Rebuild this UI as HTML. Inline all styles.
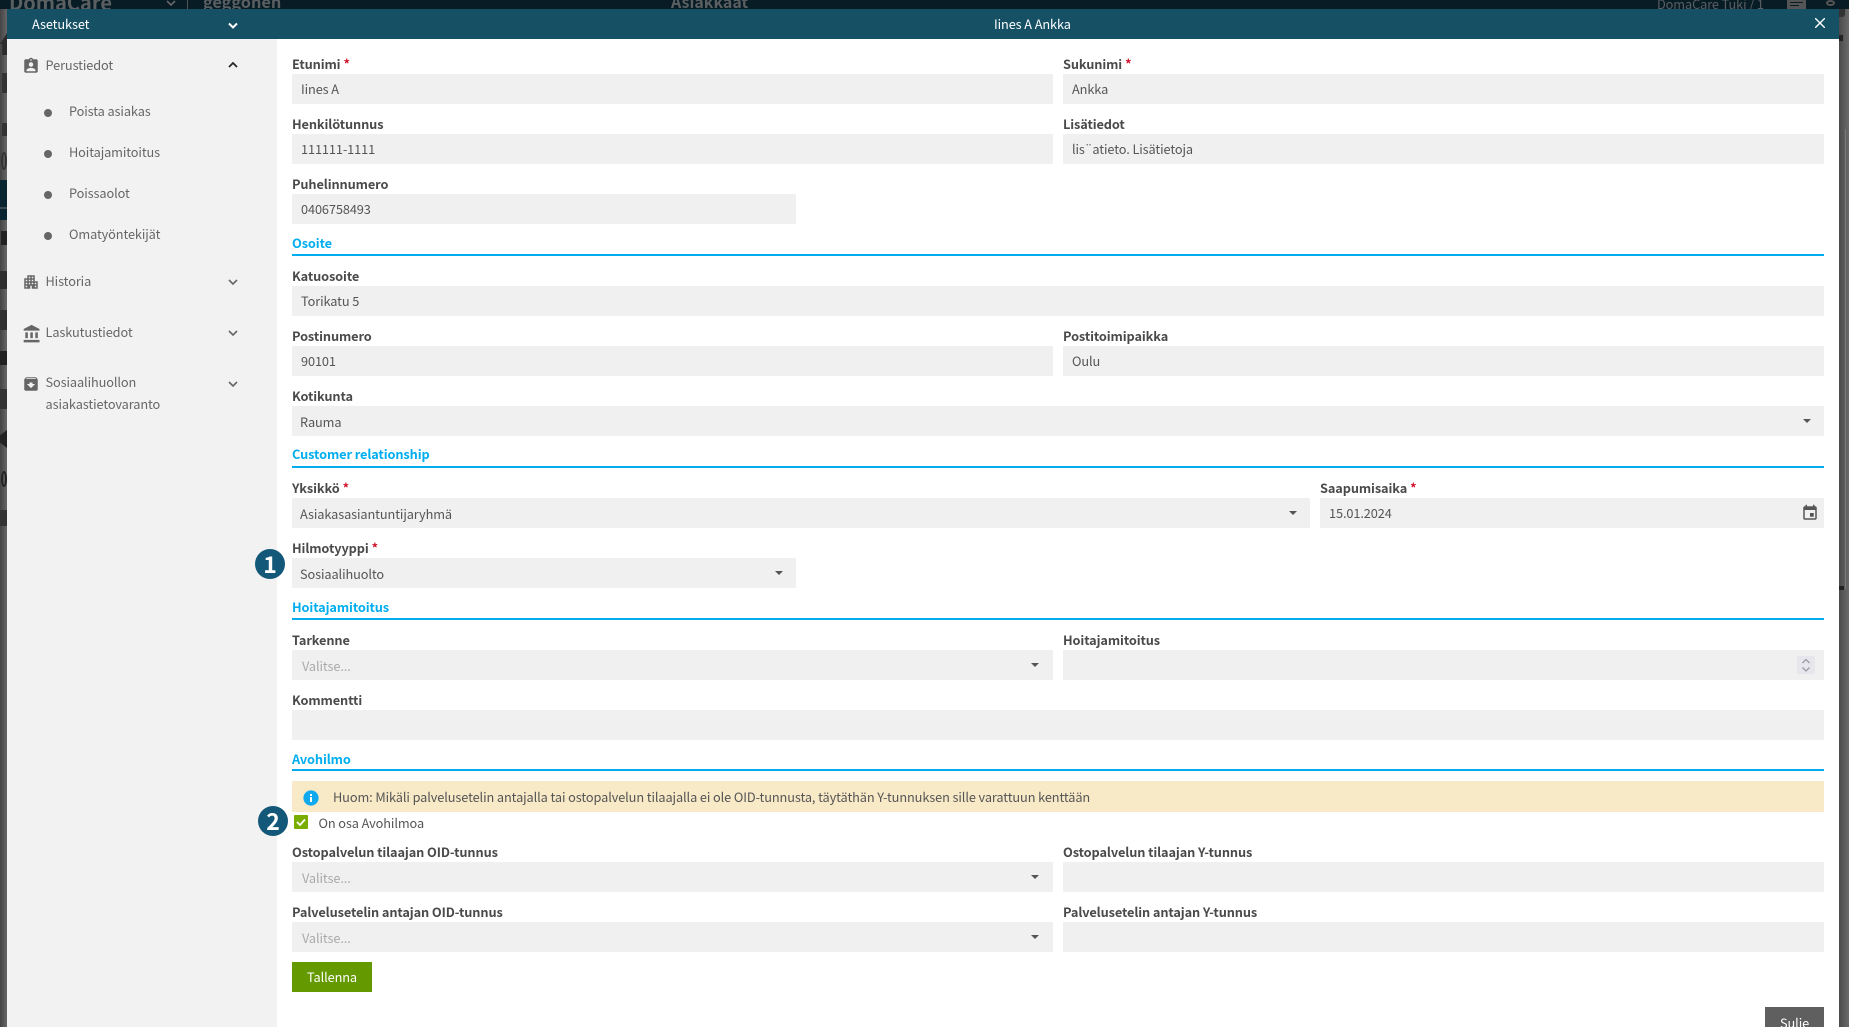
<!DOCTYPE html>
<html lang="fi">
<head>
<meta charset="utf-8">
<title>Iines A Ankka</title>
<style>
html,body{margin:0;padding:0;width:1849px;height:1027px;overflow:hidden;background:#5a5a5a}
body{position:relative;font-family:"Noto Sans CJK JP","Liberation Sans",sans-serif;font-size:12.75px;letter-spacing:-.1px;color:#555}
div,span,svg{position:absolute;box-sizing:border-box;white-space:nowrap}
.l{height:20px;line-height:20px;font-weight:700;color:#4a4a4a}
.l i{font-style:normal;color:#d0142c;margin-left:3px}
.i{height:30px;line-height:30px;background:#f0f0f0;padding-left:9px;color:#555}
.o{line-height:32px}
.p{color:#aaa}
.h{left:292px;height:20px;line-height:20px;font-weight:700;color:#00aeef}
.r{left:292px;width:1532px;height:2px;background:#00aeef}
.s{left:69px;height:20px;line-height:20px;color:#666}
.t{left:45.500px;height:20px;line-height:20px;color:#666}
.d{left:44px;width:8px;height:8px;border-radius:50%;background:#666}
.c{width:0;height:0;border-left:4px solid transparent;border-right:4px solid transparent;border-top:4px solid #555}
.g{fill:#666}
.ch{fill:none;stroke:#666;stroke-width:1.6}
.b{width:30px;height:30px;border-radius:50%;background:#135878;color:#fff;text-align:center;line-height:29px;font-weight:700;font-size:23px;letter-spacing:0}
.top{color:#5a5f62;font-weight:700}
</style>
</head>
<body>
<!-- dimmed background app -->
<div style="left:0;top:0;width:1849px;height:9px;background:#081c26;overflow:hidden">
  <div class="top" style="left:9px;top:-14px;font-size:20px;line-height:32px;letter-spacing:0">DomaCare</div>
  <div class="top" style="left:203px;top:-11px;font-size:16.300px;line-height:24px;letter-spacing:0">geggonen</div>
  <div class="top" style="left:671px;top:-11px;font-size:16px;line-height:24px;letter-spacing:0">Asiakkaat</div>
  <div class="top" style="left:1657px;top:-6px;line-height:20px;font-weight:400">DomaCare Tuki / 1</div>
  <div style="left:187px;top:0;width:1px;height:9px;background:#555"></div>
  <svg style="left:165px;top:0" width="12" height="8"><polyline points="2,1 6,5 10,1" class="ch"/></svg>
  <div style="left:1787px;top:0;width:19px;height:9px;background:#555"></div>
  <div style="left:1790px;top:2px;width:13px;height:1px;background:#081c26"></div>
  <div style="left:1790px;top:5px;width:9px;height:1px;background:#081c26"></div>
  <div style="left:1826px;top:0;width:9px;height:6px;border-radius:50%;border:2px solid #555"></div>
</div>
<!-- left strip -->
<div style="left:0;top:9px;width:7px;height:1018px;background:linear-gradient(90deg,#444,#666)">
  <div style="left:0;top:171px;width:7px;height:40px;background:#092630"></div>
  <div style="left:0;top:198px;width:7px;height:2px;background:#3a4a50"></div>
  <div style="left:0;top:24px;width:7px;height:22px;background:#2c2c2c;clip-path:polygon(100% 0,100% 100%,30% 100%,30% 50%,0 50%)"></div>
  <div style="left:2px;top:64px;width:5px;height:20px;background:#333"></div>
  <div style="left:2px;top:114px;width:5px;height:13px;background:#333"></div>
  <div style="left:1px;top:143px;width:6px;height:18px;border:2px solid #333;border-radius:50%"></div>
  <div style="left:1px;top:222px;width:6px;height:14px;background:#222"></div>
  <div style="left:0;top:262px;width:7px;height:18px;background:#2f2f2f"></div>
  <div style="left:0;top:301px;width:7px;height:20px;background:#2f2f2f"></div>
  <div style="left:0;top:342px;width:7px;height:14px;background:#222"></div>
  <div style="left:0;top:380px;width:7px;height:20px;background:#333"></div>
  <div style="left:0;top:421px;width:7px;height:18px;background:#222;clip-path:polygon(0 30%,100% 0,100% 100%,0 70%)"></div>
  <div style="left:1px;top:462px;width:6px;height:16px;border:2px solid #222;border-radius:50%"></div>
  <div style="left:0;top:501px;width:7px;height:16px;background:#333"></div>
</div>
<!-- right strip -->
<div style="left:1839px;top:9px;width:10px;height:1018px;background:linear-gradient(90deg,#4a4a4a,#6a6a6a)">
  <div style="left:0;top:0;width:6px;height:8px;background:#333;border-radius:0 0 3px 0"></div>
  <div style="left:0;top:26px;width:4px;height:6px;background:#222"></div>
  <div style="left:0;top:577px;width:5px;height:4px;background:#222"></div>
  <div style="left:6px;top:120px;width:1px;height:460px;background:#7a7a7a"></div>
</div>

<!-- modal -->
<div style="left:7px;top:9px;width:1832px;height:1018px;background:#fff"></div>
<div style="left:7px;top:9px;width:1832px;height:30px;background:#165064"></div>
<div style="left:7px;top:39px;width:270px;height:988px;background:#f2f2f2"></div>

<div style="left:32px;top:14px;height:20px;line-height:20px;color:#fff">Asetukset</div>
<svg style="left:228px;top:22px" width="10" height="8"><polyline points="1,1.5 5,5.5 9,1.5" fill="none" stroke="#fff" stroke-width="2"/></svg>
<div style="left:994px;top:14px;height:20px;line-height:20px;color:#fff">Iines A Ankka</div>
<svg style="left:1815px;top:18px" width="10" height="10"><path d="M0 0L10 10M10 0L0 10" stroke="#fff" stroke-width="1.400" fill="none"/></svg>

<!-- sidebar -->
<svg style="left:22px;top:57px" width="18" height="18" viewBox="0 0 24 24"><path class="g" d="M19 3h-4.180C14.400 1.840 13.300 1 12 1c-1.300 0-2.400.84-2.820 2H5c-1.100 0-2 .9-2 2v14c0 1.100.9 2 2 2h14c1.100 0 2-.9 2-2V5c0-1.100-.9-2-2-2zm-7 0c.55 0 1 .45 1 1s-.45 1-1 1-1-.45-1-1 .45-1 1-1zm0 4c1.660 0 3 1.340 3 3s-1.340 3-3 3-3-1.340-3-3 1.340-3 3-3zm6 12H6v-1.400c0-2 4-3.100 6-3.100s6 1.100 6 3.100V19z"/></svg>
<div class="t" style="top:55px">Perustiedot</div>
<svg style="left:228px;top:61px" width="10" height="8"><polyline points="1,6 5,2 9,6" fill="none" stroke="#222" stroke-width="1.700"/></svg>

<div class="d" style="top:109px"></div><div class="s" style="top:101px">Poista asiakas</div>
<div class="d" style="top:150px"></div><div class="s" style="top:142px">Hoitajamitoitus</div>
<div class="d" style="top:191px"></div><div class="s" style="top:183px">Poissaolot</div>
<div class="d" style="top:232px"></div><div class="s" style="top:224px">Omatyöntekijät</div>

<svg style="left:22px;top:273px" width="18" height="18" viewBox="0 0 24 24"><path class="g" d="M17 11V3H7v4H3v14h8v-4h2v4h8V11h-4zM7 19H5v-2h2v2zm0-4H5v-2h2v2zm0-4H5V9h2v2zm4 4H9v-2h2v2zm0-4H9V9h2v2zm0-4H9V5h2v2zm4 8h-2v-2h2v2zm0-4h-2V9h2v2zm0-4h-2V5h2v2zm4 12h-2v-2h2v2zm0-4h-2v-2h2v2z"/></svg>
<div class="t" style="top:270.500px">Historia</div>
<svg style="left:228px;top:278px" width="10" height="8"><polyline points="1,2 5,6 9,2" class="ch"/></svg>

<svg style="left:22px;top:324px" width="20" height="20" viewBox="0 0 24 24"><path class="g" d="M4 10v7h3v-7H4zm6 0v7h3v-7h-3zM2 22h19v-3H2v3zm14-12v7h3v-7h-3zm-4.500-9L2 6v2h19V6l-9.500-5z"/></svg>
<div class="t" style="top:321.500px">Laskutustiedot</div>
<svg style="left:228px;top:329px" width="10" height="8"><polyline points="1,2 5,6 9,2" class="ch"/></svg>

<svg style="left:22px;top:375px" width="18" height="18" viewBox="0 0 24 24"><path class="g" d="M20.540 5.230l-1.390-1.680C18.880 3.210 18.470 3 18 3H6c-.47 0-.88.21-1.160.55L3.460 5.230C3.170 5.570 3 6.020 3 6.500V19c0 1.100.9 2 2 2h14c1.100 0 2-.9 2-2V6.500c0-.48-.17-.93-.46-1.270zM12 17.500L6.500 12H10v-2h4v2h3.500L12 17.500zM5.120 5l.81-1h12l.94 1H5.120z"/></svg>
<div class="t" style="top:372px">Sosiaalihuollon</div>
<div class="t" style="top:393.500px">asiakastietovaranto</div>
<svg style="left:228px;top:380px" width="10" height="8"><polyline points="1,2 5,6 9,2" class="ch"/></svg>

<!-- form -->
<div class="l" style="left:292px;top:54px">Etunimi<i>*</i></div>
<div class="i" style="left:292px;top:74px;width:761px">Iines A</div>
<div class="l" style="left:1063px;top:54px">Sukunimi<i>*</i></div>
<div class="i" style="left:1063px;top:74px;width:761px">Ankka</div>

<div class="l" style="left:292px;top:114px">Henkilötunnus</div>
<div class="i" style="left:292px;top:134px;width:761px">111111-1111</div>
<div class="l" style="left:1063px;top:114px">Lisätiedot</div>
<div class="i" style="left:1063px;top:134px;width:761px">lis¨atieto. Lisätietoja</div>

<div class="l" style="left:292px;top:174px">Puhelinnumero</div>
<div class="i" style="left:292px;top:194px;width:504px">0406758493</div>

<div class="h" style="top:233px">Osoite</div>
<div class="r" style="top:254px"></div>

<div class="l" style="left:292px;top:266px">Katuosoite</div>
<div class="i" style="left:292px;top:286px;width:1532px">Torikatu 5</div>

<div class="l" style="left:292px;top:326px">Postinumero</div>
<div class="i" style="left:292px;top:346px;width:761px">90101</div>
<div class="l" style="left:1063px;top:326px">Postitoimipaikka</div>
<div class="i" style="left:1063px;top:346px;width:761px">Oulu</div>

<div class="l" style="left:292px;top:386px">Kotikunta</div>
<div class="i o" style="left:292px;top:406px;width:1532px;padding-left:8px">Rauma</div>
<div class="c" style="left:1803px;top:419px"></div>

<div class="h" style="top:444px">Customer relationship</div>
<div class="r" style="top:466px"></div>

<div class="l" style="left:292px;top:478px">Yksikkö<i>*</i></div>
<div class="i o" style="left:292px;top:498px;width:1018px;padding-left:8px">Asiakasasiantuntijaryhmä</div>
<div class="c" style="left:1289px;top:511px"></div>
<div class="l" style="left:1320px;top:478px">Saapumisaika<i>*</i></div>
<div class="i" style="left:1320px;top:498px;width:504px">15.01.2024</div>
<svg style="left:1801px;top:504px" width="18" height="18" viewBox="0 0 24 24"><path fill="#555" d="M17 12h-5v5h5v-5zM16 1v2H8V1H6v2H5c-1.110 0-1.990.9-1.990 2L3 19c0 1.100.89 2 2 2h14c1.100 0 2-.9 2-2V5c0-1.100-.9-2-2-2h-1V1h-2zm3 18H5V8h14v11z"/></svg>

<div class="l" style="left:292px;top:538px">Hilmotyyppi<i>*</i></div>
<div class="i o" style="left:292px;top:558px;width:504px;padding-left:8px">Sosiaalihuolto</div>
<div class="c" style="left:775px;top:571px"></div>
<div class="b" style="left:255px;top:549px">1</div>

<div class="h" style="top:596.500px">Hoitajamitoitus</div>
<div class="r" style="top:618px"></div>

<div class="l" style="left:292px;top:630px">Tarkenne</div>
<div class="i p o" style="left:292px;top:650px;width:761px;padding-left:10px">Valitse...</div>
<div class="c" style="left:1031px;top:663px"></div>
<div class="l" style="left:1063px;top:630px">Hoitajamitoitus</div>
<div class="i" style="left:1063px;top:650px;width:761px"></div>
<div style="left:1797px;top:656px;width:18px;height:18px;background:#e6e6ec"></div>
<svg style="left:1797px;top:656px" width="18" height="18"><path d="M5.500 7L9 3.500L12.500 7M5.500 11.500L9 15L12.500 11.500" fill="none" stroke="#9a9aa2" stroke-width="1.300"/></svg>

<div class="l" style="left:292px;top:690px">Kommentti</div>
<div class="i" style="left:292px;top:710px;width:1532px"></div>

<div class="h" style="top:748.500px">Avohilmo</div>
<div class="r" style="top:769px"></div>

<div style="left:292px;top:781px;width:1532px;height:31px;background:#f8e9c7;line-height:31px;padding-left:41px;color:#555">Huom: Mikäli palvelusetelin antajalla tai ostopalvelun tilaajalla ei ole OID-tunnusta, täytäthän Y-tunnuksen sille varattuun kenttään</div>
<svg style="left:303px;top:790px" width="16" height="16" viewBox="0 0 16 16"><circle cx="8" cy="8" r="7.600" fill="#0ea9ee"/><rect x="7" y="7" width="2" height="5" fill="#fff"/><rect x="7" y="4" width="2" height="2" fill="#fff"/></svg>

<div style="left:294px;top:815px;width:14px;height:14px;background:#79ad00;border-radius:1px"></div>
<svg style="left:294px;top:815px" width="14" height="14"><polyline points="3,7 6,10 11,4.500" fill="none" stroke="#fff" stroke-width="1.800"/></svg>
<div style="left:318.500px;top:812.500px;height:20px;line-height:20px;color:#555">On osa Avohilmoa</div>
<div class="b" style="left:258px;top:806px">2</div>

<div class="l" style="left:292px;top:842px">Ostopalvelun tilaajan OID-tunnus</div>
<div class="i p o" style="left:292px;top:862px;width:761px;padding-left:10px">Valitse...</div>
<div class="c" style="left:1031px;top:875px"></div>
<div class="l" style="left:1063px;top:842px">Ostopalvelun tilaajan Y-tunnus</div>
<div class="i" style="left:1063px;top:862px;width:761px"></div>

<div class="l" style="left:292px;top:902px">Palvelusetelin antajan OID-tunnus</div>
<div class="i p o" style="left:292px;top:922px;width:761px;padding-left:10px">Valitse...</div>
<div class="c" style="left:1031px;top:935px"></div>
<div class="l" style="left:1063px;top:902px">Palvelusetelin antajan Y-tunnus</div>
<div class="i" style="left:1063px;top:922px;width:761px"></div>

<div style="left:292px;top:962px;width:80px;height:30px;background:#659900;color:#fff;text-align:center;line-height:30px">Tallenna</div>
<div style="left:1765px;top:1007px;width:59px;height:20px;background:#5f5f5f;overflow:hidden"><span style="left:15px;top:6px;line-height:20px;color:#fff">Sulje</span></div>
</body>
</html>
